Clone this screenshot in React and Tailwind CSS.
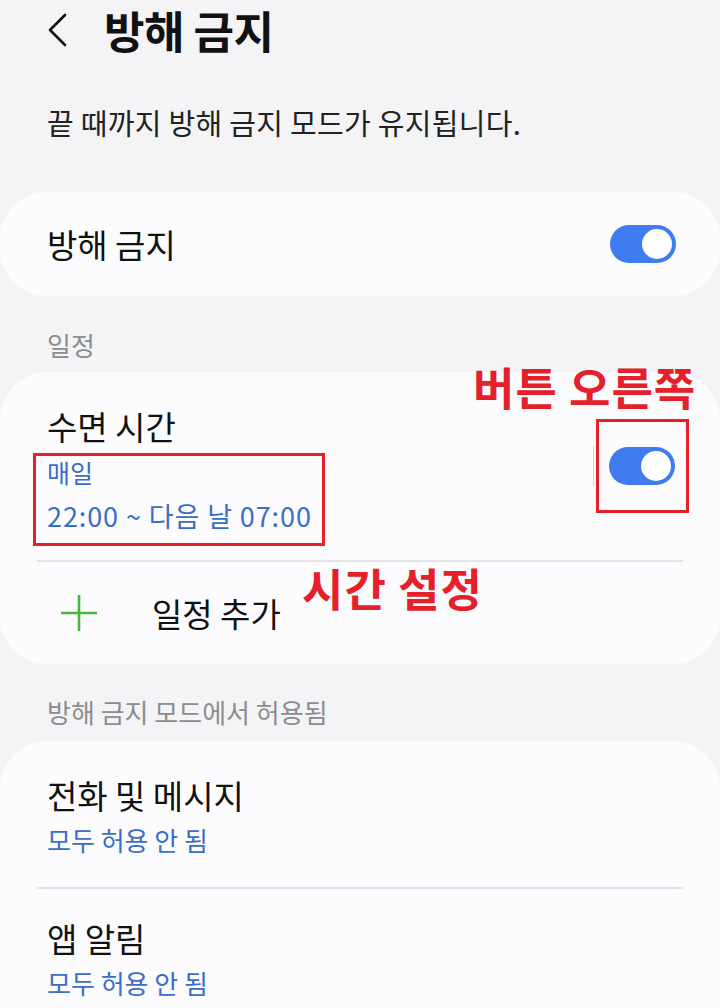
import React from 'react';

const Toggle = () => (
    <div className="relative w-[66px] h-[38px] rounded-full bg-[#3f7cf0] shrink-0">
        <div className="absolute right-[4px] top-[4px] w-[30px] h-[30px] rounded-full bg-white" />
    </div>
);

const Label = ({ children }) => (
    <div className="pl-[47px] text-[26px] leading-[30px] text-[#8c8c91]">{children}</div>
);

const App = () => {
    return (
        <div className="relative w-[720px] h-[1008px] overflow-hidden bg-[#f4f4f6] font-['Noto_Sans_CJK_KR',sans-serif] text-[#111]">
            {/* header */}
            <div className="h-[60px] flex items-center pl-[44px]">
                <svg width="26" height="34" viewBox="0 0 26 34" fill="none">
                    <path d="M21 2 L6 17 L21 32" stroke="#111" strokeWidth="2.6" strokeLinecap="round" strokeLinejoin="round" />
                </svg>
                <h1 className="ml-[34px] text-[44px] font-bold leading-[56px] tracking-[-0.5px]">방해 금지</h1>
            </div>

            <p className="mt-[46px] pl-[47px] text-[29px] leading-[32px] tracking-[0.3px] text-[#222]">끝 때까지 방해 금지 모드가 유지됩니다.</p>

            {/* main switch */}
            <div className="mt-[54px] h-[104px] rounded-[48px] bg-[#fcfcfe] flex items-center justify-between pl-[47px] pr-[44px]">
                <span className="text-[33px] leading-[40px]">방해 금지</span>
                <Toggle />
            </div>

            <div className="mt-[34px] mb-[12px]">
                <Label>일정</Label>
            </div>

            {/* schedule card */}
            <div className="h-[292px] rounded-[48px] bg-[#fcfcfe] flex flex-col">
                <div className="h-[188px] flex items-center justify-between pl-[47px] pr-[45px]">
                    <div className="self-start pt-[36px]">
                        <div className="text-[33px] leading-[36px]">수면 시간</div>
                        <div className="mt-[11px] text-[25px] leading-[34px] text-[#3b6cc7]">매일</div>
                        <div className="mt-[10px] text-[27px] leading-[34px] tracking-[0.9px] text-[#3b6cc7]">22:00 ~ 다음 날 07:00</div>
                    </div>
                    <div className="flex items-center">
                        <div className="w-px h-[40px] bg-[#d6d6da] mr-[15px]" />
                        <Toggle />
                    </div>
                </div>
                <div className="mx-[37px] h-[2px] bg-[#e4e4e8]" />
                <div className="flex-1 flex items-center pl-[60px]">
                    <svg width="38" height="38" viewBox="0 0 38 38">
                        <path d="M19 1 V37 M1 19 H37" stroke="#45b83c" strokeWidth="2.6" />
                    </svg>
                    <span className="ml-[54px] text-[33px] leading-[40px]">일정 추가</span>
                </div>
            </div>

            <div className="mt-[33px] mb-[14px]">
                <Label>방해 금지 모드에서 허용됨</Label>
            </div>

            {/* allowed card */}
            <div className="rounded-t-[48px] bg-[#fcfcfe] h-[300px]">
                <div className="pl-[47px] pt-[36px] pb-[30px]">
                    <div className="text-[33px] leading-[36px]">전화 및 메시지</div>
                    <div className="mt-[10px] text-[26px] leading-[34px] text-[#3b6cc7]">모두 허용 안 됨</div>
                </div>
                <div className="mx-[37px] h-[2px] bg-[#e4e4e8]" />
                <div className="pl-[47px] pt-[31px]">
                    <div className="text-[33px] leading-[36px]">앱 알림</div>
                    <div className="mt-[10px] text-[26px] leading-[34px] text-[#3b6cc7]">모두 허용 안 됨</div>
                </div>
            </div>

            {/* red annotations */}
            <div className="absolute left-[473px] top-[361px] text-[45px] leading-[52px] font-bold text-[#e5202b] tracking-[1px]">버튼 오른쪽</div>
            <div className="absolute left-[596px] top-[419px] w-[93px] h-[94px] border-[3px] border-[#e5202b]" />
            <div className="absolute left-[33px] top-[453px] w-[292px] h-[93px] border-[3px] border-[#e5202b]" />
            <div className="absolute left-[302px] top-[562px] text-[45px] leading-[52px] font-bold text-[#e5202b] tracking-[1px]">시간 설정</div>
        </div>
    );
};

export default App;
